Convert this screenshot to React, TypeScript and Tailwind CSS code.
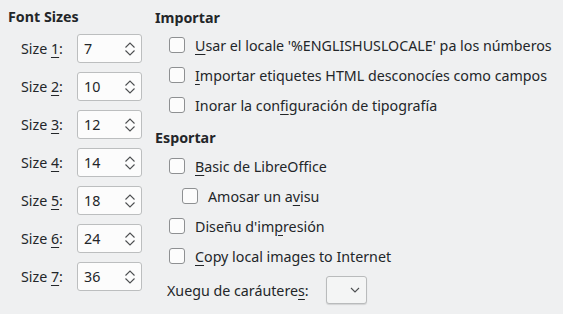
const sizes = ["7", "10", "12", "14", "18", "24", "36"];

function Mn({ children }: { children: React.ReactNode }) {
  return <span className="underline decoration-1 underline-offset-[3px]">{children}</span>;
}

function SpinBox({ value }: { value: string }) {
  return (
    <div className="flex items-center justify-between w-[65px] h-[29px] rounded-[3px] border border-[#bcbebf] bg-[#fcfcfc] pl-[6px] pr-[5px]">
      <span>{value}</span>
      <svg width="12" height="16" viewBox="0 0 12 16" fill="none" stroke="#4d4f51" strokeWidth="1.1">
        <path d="M1.5 6.5 L6 2 L10.5 6.5" />
        <path d="M1.5 9.5 L6 14 L10.5 9.5" />
      </svg>
    </div>
  );
}

function Check({ children, indent = false }: { children: React.ReactNode; indent?: boolean }) {
  return (
    <div className={`flex items-center h-[30px] ${indent ? "pl-[27px]" : "pl-[14px]"}`}>
      <div className="w-[16px] h-[16px] rounded-[3px] border border-[#8e9092] bg-[#fcfcfc] shrink-0" />
      <span className="ml-[10px] whitespace-nowrap">{children}</span>
    </div>
  );
}

export default function App() {
  return (
    <div className="flex w-[563px] h-[314px] bg-[#eff0f1] text-[14.25px] leading-[19px] text-[#232629] font-['Noto_Sans',sans-serif] overflow-hidden">
      {/* Left: font sizes */}
      <div className="w-[147px] pl-2 pt-[7px] shrink-0">
        <div className="font-bold">Font Sizes</div>
        <div className="mt-[8px] flex flex-col gap-[9px]">
          {sizes.map((v, i) => (
            <div key={i} className="flex items-center h-[29px] pl-[13px]">
              <span className="w-[56px]">
                Size <Mn>{i + 1}</Mn>:
              </span>
              <SpinBox value={v} />
            </div>
          ))}
        </div>
      </div>

      {/* Right: import / export */}
      <div className="pl-2 pt-[8px] flex-1">
        <div className="font-bold">Importar</div>
        <div className="mt-[3px]">
          <Check>
            <Mn>U</Mn>sar el locale '%ENGLISHUSLOCALE' pa los númberos
          </Check>
          <Check>
            <Mn>I</Mn>mportar etiquetes HTML desconocíes como campos
          </Check>
          <Check>
            Inorar la con<Mn>f</Mn>iguración de tipografía
          </Check>
        </div>

        <div className="font-bold mt-[8px]">Esportar</div>
        <div className="mt-[4px]">
          <Check>
            <Mn>B</Mn>asic de LibreOffice
          </Check>
          <Check indent>
            Amosar un a<Mn>v</Mn>isu
          </Check>
          <Check>
            Diseñu d'im<Mn>p</Mn>resión
          </Check>
          <Check>
            <Mn>C</Mn>opy local images to Internet
          </Check>
        </div>

        <div className="flex items-center h-[28px] mt-[5px] pl-[12px]">
          <span className="w-[159px] whitespace-nowrap">
            Xuegu de caráutere<Mn>s</Mn>:
          </span>
          <div className="flex items-center justify-end w-[41px] h-[28px] rounded-[3px] border border-[#b9bbbc] bg-[#f4f5f5] shadow-[0_1px_1px_rgba(0,0,0,0.12)] pr-[6px]">
            <svg width="10" height="6" viewBox="0 0 10 6" fill="none" stroke="#4d4f51" strokeWidth="1.1">
              <path d="M1 1 L5 5 L9 1" />
            </svg>
          </div>
        </div>
      </div>
    </div>
  );
}
